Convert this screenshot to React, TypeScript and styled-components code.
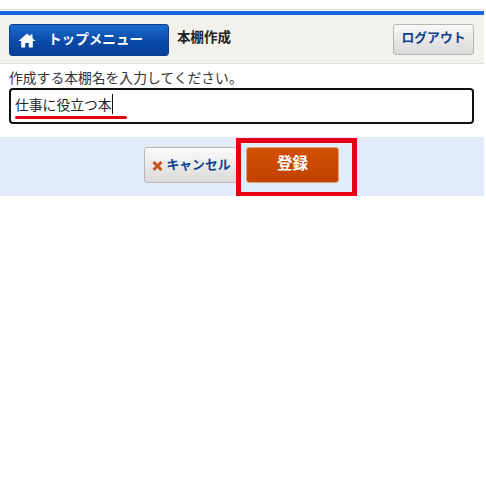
import React from "react";
import styled, { createGlobalStyle } from "styled-components";

const Global = createGlobalStyle`
  html, body { margin: 0; padding: 0; background: #fff; }
  body { font-family: "Liberation Sans", "Noto Sans CJK JP", sans-serif; }
`;

const Page = styled.div`
  width: 484px;
  padding-top: 9px;
  position: relative;
`;

const TopRule = styled.div`
  height: 1px;
  background: #e2e2e2;
  margin-bottom: 1px;
`;

const Header = styled.header`
  box-sizing: border-box;
  height: 53px;
  border-top: 4px solid #1a66dc;
  border-bottom: 1px solid #dfdfdb;
  background: #f3f2ec;
  display: flex;
  align-items: flex-start;
  padding: 9px 10px 0 9px;
`;

const MenuButton = styled.a`
  box-sizing: border-box;
  width: 160px;
  height: 32px;
  display: flex;
  align-items: center;
  padding: 0 0 4px 8px;
  gap: 12px;
  border: 1px solid #0b3f92;
  border-radius: 3px;
  background: linear-gradient(#1a6bd0, #0a4aa8 55%, #073f98);
  color: #fff;
  font-size: 13.6px;
  font-weight: 700;
`;

const HomeIcon = styled.svg`
  margin-top: 4px;
`;

const Title = styled.h1`
  margin: 0 0 0 8px;
  font-size: 13.5px;
  line-height: 28px;
  font-weight: 700;
  color: #222;
  flex: 1;
`;

const LogoutButton = styled.a`
  box-sizing: border-box;
  width: 81px;
  height: 31px;
  display: flex;
  align-items: center;
  justify-content: center;
  padding-bottom: 6px;
  border: 1px solid #b4b4b4;
  border-radius: 3px;
  background: linear-gradient(#f8f8f8, #d8d8d8);
  color: #0d3f8c;
  font-size: 12.8px;
  font-weight: 700;
`;

const Form = styled.div`
  padding: 6px 10px 13px 9px;
`;

const Label = styled.div`
  font-size: 13.8px;
  line-height: 17px;
  color: #333;
  margin-bottom: 1px;
`;

const NameField = styled.div`
  box-sizing: border-box;
  height: 36px;
  border: 2px solid #111;
  border-radius: 4px;
  background: #fff;
  display: flex;
  align-items: center;
  padding: 0 0 4px 4px;
  font-size: 13.8px;
  color: #222;
`;

const Caret = styled.span`
  display: inline-block;
  width: 1px;
  height: 20px;
  background: #111;
`;

const Actions = styled.div`
  height: 59px;
  box-sizing: border-box;
  background: #e2edfb;
  display: flex;
  justify-content: center;
  align-items: center;
  gap: 8px;
  padding: 0 1px 3px 0;
`;

const CancelButton = styled.a`
  box-sizing: border-box;
  width: 94px;
  height: 36px;
  display: flex;
  align-items: center;
  justify-content: center;
  gap: 4px;
  padding-bottom: 4px;
  border: 1px solid #b8b8b8;
  border-radius: 3px;
  background: linear-gradient(#fbfbfb, #d9d9d9);
  color: #0d3f8c;
  font-size: 12.8px;
  font-weight: 700;
`;

const CancelIcon = styled.svg`
  margin-top: 5px;
`;

const SubmitButton = styled.a`
  box-sizing: border-box;
  width: 93px;
  height: 36px;
  display: flex;
  align-items: center;
  justify-content: center;
  padding-bottom: 6px;
  border: 1px solid #e8a070;
  border-radius: 3px;
  background: linear-gradient(#d25000, #bf4200);
  color: #fff;
  font-size: 15.5px;
  font-weight: 700;
`;

const RedBox = styled.div`
  position: absolute;
  left: 236px;
  top: 138px;
  width: 121px;
  height: 59px;
  box-sizing: border-box;
  border: 5px solid #e60012;
`;

const RedLine = styled.div`
  position: absolute;
  left: 15px;
  top: 116px;
  width: 112px;
  height: 3px;
  border-radius: 2px;
  background: #e60012;
`;

export default function App() {
  return (
    <>
      <Global />
      <Page>
        <TopRule />
        <Header>
          <MenuButton>
            <HomeIcon width="18" height="15" viewBox="0 0 18 15" aria-hidden="true">
              <path d="M9 0.5 L0.5 8 H3.2 V14.5 H7.2 V10 H10.8 V14.5 H14.8 V8 H17.5 L14.5 5.3 V1.5 H12.5 V3.5 Z" fill="#fff" />
            </HomeIcon>
            トップメニュー
          </MenuButton>
          <Title>本棚作成</Title>
          <LogoutButton>ログアウト</LogoutButton>
        </Header>
        <Form>
          <Label>作成する本棚名を入力してください。</Label>
          <NameField>
            仕事に役立つ本
            <Caret />
          </NameField>
        </Form>
        <Actions>
          <CancelButton>
            <CancelIcon width="11" height="10" viewBox="0 0 11 10" aria-hidden="true">
              <path d="M1.5 1 L9.5 9 M9.5 1 L1.5 9" stroke="#c9571c" strokeWidth="3" />
            </CancelIcon>
            キャンセル
          </CancelButton>
          <SubmitButton>登録</SubmitButton>
        </Actions>
        <RedLine />
        <RedBox />
      </Page>
    </>
  );
}
